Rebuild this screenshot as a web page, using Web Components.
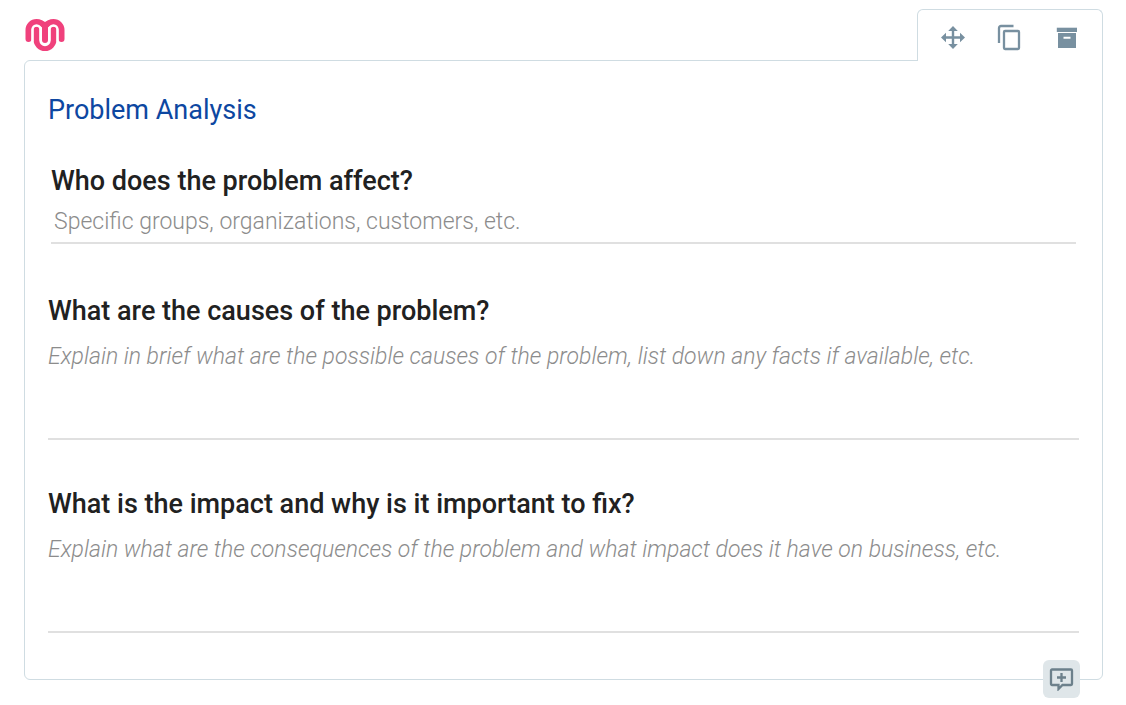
<!DOCTYPE html>
<html lang="en">
<head>
  <meta charset="utf-8">
  <meta name="viewport" content="width=device-width, initial-scale=1">
  <title>Problem Analysis</title>
  <style>
    body {
      margin: 0;
      background: #fff;
      font-family: Roboto, "Liberation Sans", sans-serif;
    }
  </style>
</head>
<body>
  <form-card>
    <brand-logo slot="logo"></brand-logo>
    <card-toolbar slot="tools"></card-toolbar>
    <span slot="title">Problem Analysis</span>
    <form-field compact label="Who does the problem affect?" hint="Specific groups, organizations, customers, etc."></form-field>
    <form-field label="What are the causes of the problem?" hint="Explain in brief what are the possible causes of the problem, list down any facts if available, etc."></form-field>
    <form-field label="What is the impact and why is it important to fix?" hint="Explain what are the consequences of the problem and what impact does it have on business, etc."></form-field>
    <comment-button slot="comment"></comment-button>
  </form-card>

  <script>
    class BrandLogo extends HTMLElement {
      constructor() {
        super();
        this.attachShadow({ mode: 'open' });
      }

      connectedCallback() {
        this.shadowRoot.innerHTML = `
          <style>
            :host {
              display: block;
            }

            svg {
              display: block;
            }
          </style>
          <svg width="40" height="32" viewBox="0 0 40 32" fill="none" stroke="#f0417c" stroke-width="6" stroke-linecap="round" role="img" aria-label="Logo">
            <path d="M3.500 20V11a8 8 0 0 1 8-8c3.500 0 6 1.500 8.500 4 2.500-2.500 5-4 8.500-4a8 8 0 0 1 8 8v9"/>
            <path d="M11.500 10.500v10a8.500 8.500 0 0 0 17 0v-10"/>
            <path d="M20 7v14"/>
            <path d="M7.500 22V10.500a4 4 0 0 1 8 0v11a4.500 4.500 0 0 0 9 0v-11a4 4 0 0 1 8 0V22" stroke="#fff" stroke-width="2.300"/>
          </svg>
        `;
      }
    }

    class CardToolbar extends HTMLElement {
      constructor() {
        super();
        this.attachShadow({ mode: 'open' });
      }

      connectedCallback() {
        this.shadowRoot.innerHTML = `
          <style>
            :host {
              display: flex;
              justify-content: space-between;
              gap: 29px;
            }

            button {
              display: block;
              width: 28px;
              height: 28px;
              padding: 0;
              border: 0;
              background: none;
              color: #7890a0;
              cursor: pointer;
            }

            svg {
              display: block;
            }
          </style>
          <button type="button" aria-label="Move">
            <svg width="28" height="28" viewBox="0 0 28 28" fill="currentColor">
              <path d="M14 2l4.800 5H15.200v5.300H21V8.700l5 4.800-5 4.800v-3.600h-5.800V20h3.600L14 25l-4.800-5h3.600v-5.300H7v3.600l-5-4.800 5-4.800v3.600h5.800V7H9.200z"/>
            </svg>
          </button>
          <button type="button" aria-label="Duplicate">
            <svg width="28" height="28" viewBox="0 0 28 28" fill="none" stroke="currentColor" stroke-width="2.300">
              <path d="M3 19V4a2 2 0 0 1 2-2h12.500"/>
              <rect x="8" y="7" width="15" height="18" rx="1"/>
            </svg>
          </button>
          <button type="button" aria-label="Archive">
            <svg width="28" height="28" viewBox="0 0 28 28" fill="currentColor">
              <path d="M3.800 3.700h20.200v4.300H3.800z"/>
              <path fill-rule="evenodd" d="M5 9h18v15H5zm5.500 3.700v2h7v-2z"/>
            </svg>
          </button>
        `;
      }
    }

    class FormField extends HTMLElement {
      constructor() {
        super();
        this.attachShadow({ mode: 'open' });
      }

      connectedCallback() {
        const label = this.getAttribute('label');
        const hint = this.getAttribute('hint');
        const control = this.hasAttribute('compact')
          ? `<input id="answer" type="text" placeholder="${hint}">`
          : `<textarea id="answer" placeholder="${hint}"></textarea>`;

        this.shadowRoot.innerHTML = `
          <style>
            :host {
              display: block;
            }

            :host([compact]) {
              padding: 0 3px;
              margin-bottom: 3px;
            }

            label {
              display: block;
              font-size: 27px;
              font-weight: 500;
              line-height: 32px;
              color: #212121;
            }

            input,
            textarea {
              display: block;
              box-sizing: border-box;
              width: 100%;
              margin: 0;
              border: 0;
              border-bottom: 2px solid #e0e0e0;
              border-radius: 0;
              outline: 0;
              background: none;
              font-family: inherit;
              font-size: 23px;
              font-weight: 300;
              line-height: 32px;
              color: #212121;
            }

            input {
              height: 47px;
              padding: 3px 3px 0;
            }

            textarea {
              height: 113px;
              padding: 14px 0 0;
              resize: none;
              overflow: hidden;
            }

            ::placeholder {
              color: #8c8c8c;
              opacity: 1;
            }

            textarea::placeholder {
              font-style: italic;
            }
          </style>
          <label for="answer">${label}</label>
          ${control}
        `;
      }
    }

    class CommentButton extends HTMLElement {
      constructor() {
        super();
        this.attachShadow({ mode: 'open' });
      }

      connectedCallback() {
        this.shadowRoot.innerHTML = `
          <style>
            :host {
              display: block;
            }

            button {
              display: grid;
              place-items: center;
              width: 37px;
              height: 38px;
              padding: 0;
              border: 0;
              border-radius: 6px;
              background: #dfe6e9;
              color: #6c808b;
              cursor: pointer;
            }
          </style>
          <button type="button" aria-label="Add comment">
            <svg width="25" height="24" viewBox="0 0 25 24" fill="none" stroke="currentColor" stroke-width="2.300">
              <path d="M3 2.500h19a1 1 0 0 1 1 1V17a1 1 0 0 1-1 1h-8.500L9.500 22v-4H3a1 1 0 0 1-1-1V3.500a1 1 0 0 1 1-1z"/>
              <path d="M12.500 6v9M8 10.500h9"/>
            </svg>
          </button>
        `;
      }
    }

    class FormCard extends HTMLElement {
      constructor() {
        super();
        this.attachShadow({ mode: 'open' });
      }

      connectedCallback() {
        this.shadowRoot.innerHTML = `
          <style>
            :host {
              display: block;
              padding: 9px 23px 24px 24px;
            }

            header {
              display: flex;
              justify-content: space-between;
              align-items: flex-start;
            }

            .logo {
              padding: 10px 1px 0;
            }

            /* the tab covers the card's top border */
            .tab {
              position: relative;
              z-index: 1;
              margin-bottom: -1px;
              padding: 14px 21px 9px;
              border: 1px solid #cfdce2;
              border-bottom: 0;
              border-radius: 6px 6px 0 0;
              background: #fff;
            }

            .card {
              position: relative;
              padding: 33px 23px 46px;
              border: 1px solid #cfdce2;
              border-radius: 6px 0 6px 6px;
            }

            h1 {
              margin: 0 0 39px;
              font-size: 27px;
              font-weight: 400;
              line-height: 32px;
              color: #0d47a1;
            }

            .fields {
              display: grid;
              gap: 48px;
            }

            .comment {
              position: absolute;
              right: 22px;
              bottom: -19px;
            }
          </style>
          <header>
            <div class="logo"><slot name="logo"></slot></div>
            <div class="tab"><slot name="tools"></slot></div>
          </header>
          <section class="card">
            <h1><slot name="title"></slot></h1>
            <div class="fields"><slot></slot></div>
            <div class="comment"><slot name="comment"></slot></div>
          </section>
        `;
      }
    }

    customElements.define('brand-logo', BrandLogo);
    customElements.define('card-toolbar', CardToolbar);
    customElements.define('form-field', FormField);
    customElements.define('comment-button', CommentButton);
    customElements.define('form-card', FormCard);
  </script>
</body>
</html>
